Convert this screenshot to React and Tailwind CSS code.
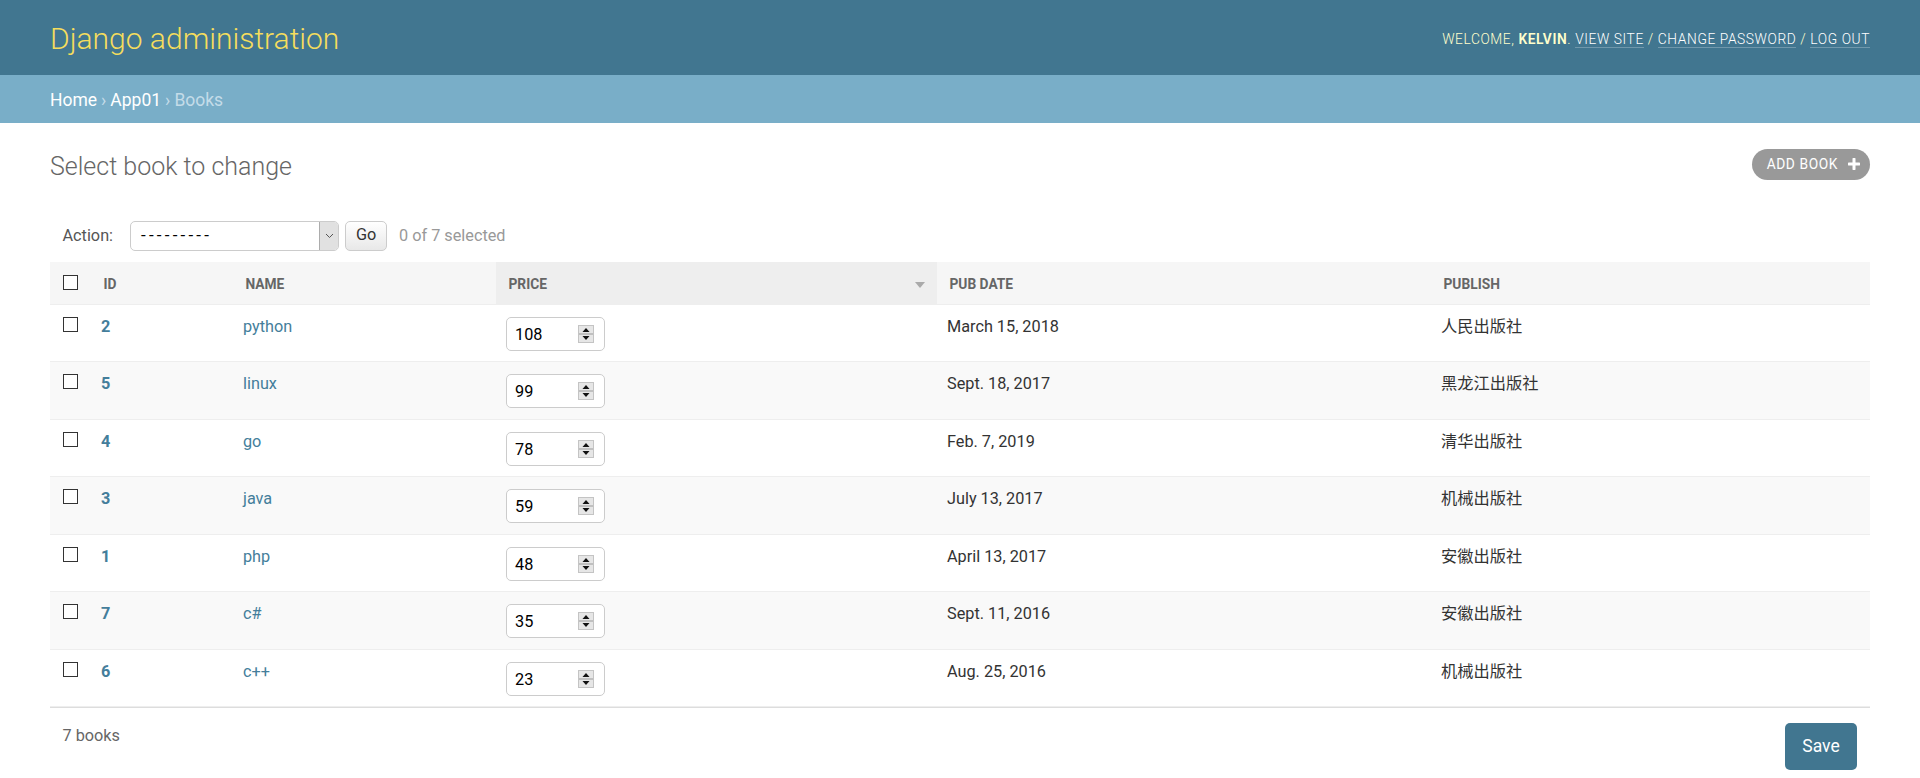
const books = [
  { id: 2, name: "python", price: 108, date: "March 15, 2018", publish: "人民出版社" },
  { id: 5, name: "linux", price: 99, date: "Sept. 18, 2017", publish: "黑龙江出版社" },
  { id: 4, name: "go", price: 78, date: "Feb. 7, 2019", publish: "清华出版社" },
  { id: 3, name: "java", price: 59, date: "July 13, 2017", publish: "机械出版社" },
  { id: 1, name: "php", price: 48, date: "April 13, 2017", publish: "安徽出版社" },
  { id: 7, name: "c#", price: 35, date: "Sept. 11, 2016", publish: "安徽出版社" },
  { id: 6, name: "c++", price: 23, date: "Aug. 25, 2016", publish: "机械出版社" },
];

function Checkbox() {
  return <span className="block w-[15px] h-[15px] border border-[#333] bg-white" />;
}

function Spinner() {
  return (
    <svg width="16" height="18" viewBox="0 0 16 18" className="shrink-0">
      <rect x="0.5" y="0.5" width="15" height="17" fill="#e6e6e6" stroke="#c4c4c4" />
      <line x1="1" y1="9" x2="15" y2="9" stroke="#9a9a9a" />
      <path d="M8 3 L11.5 7 L4.5 7 Z" fill="#111" />
      <path d="M8 15 L11.5 11 L4.5 11 Z" fill="#111" />
    </svg>
  );
}

function PriceInput({ value }) {
  return (
    <div className="mt-[2px] w-[99px] h-[34px] border border-[#ccc] rounded-[5px] bg-white flex items-center justify-between pl-[8px] pr-[10px]">
      <span className="text-[16.25px] text-black pt-[2px]">{value}</span>
      <Spinner />
    </div>
  );
}

function Header() {
  return (
    <div className="h-[75px] bg-[#417690] flex items-center justify-between px-[50px]">
      <h1 className="text-[30px] font-light text-[#f5dd5d] leading-none pt-[3px]">Django administration</h1>
      <div className="text-[13.75px] font-light tracking-[0.6px] uppercase text-[#ffc] pt-[4px]">
        Welcome, <strong className="font-semibold">kelvin</strong>.{" "}
        <a className="text-white border-b border-white/25">View site</a> /{" "}
        <a className="text-white border-b border-white/25">Change password</a> /{" "}
        <a className="text-white border-b border-white/25">Log out</a>
      </div>
    </div>
  );
}

function Breadcrumbs() {
  return (
    <div className="h-[48px] bg-[#79aec8] flex items-center px-[50px] pt-[2px] text-[17.5px] text-[#c4dce8]">
      <a className="text-white">Home</a>
      <span className="mx-[4px]">›</span>
      <a className="text-white">App01</a>
      <span className="mx-[4px]">›</span>
      <span>Books</span>
    </div>
  );
}

function ActionBar() {
  return (
    <div className="mt-[28px] h-[54px] flex items-center px-[12.5px] pt-[1px] text-[16.25px]">
      <label className="text-[#555] pt-[2px]">Action:</label>
      <div className="ml-[17px] w-[209px] h-[30px] border border-[#ccc] rounded-[5px] bg-white flex items-stretch overflow-hidden">
        <span className="flex-1 flex items-center pl-[10px] text-[17px] text-black tracking-[3.2px]">---------</span>
        <span className="w-[19px] bg-[#e1e1e1] border-l border-[#acacac] flex items-center justify-center">
          <svg width="9" height="6" viewBox="0 0 9 6">
            <path d="M1 1 L4.5 4.5 L8 1" fill="none" stroke="#555" strokeWidth="1" />
          </svg>
        </span>
      </div>
      <button className="ml-[6px] w-[42px] h-[30px] border border-[#ccc] rounded-[5px] bg-gradient-to-b from-white to-[#e8e8e8] text-[#333] text-[16.25px]">
        Go
      </button>
      <span className="ml-[12px] text-[#999] pt-[1px]">0 of 7 selected</span>
    </div>
  );
}

function BookTable() {
  return (
    <table className="w-full table-fixed border-collapse">
      <colgroup>
        <col className="w-[41px]" />
        <col className="w-[142px]" />
        <col className="w-[263px]" />
        <col className="w-[441px]" />
        <col className="w-[494px]" />
        <col />
      </colgroup>
      <thead>
        <tr className="h-[42px] bg-[#f6f6f6] text-[13.75px] font-bold uppercase text-[#666] text-left border-b border-[#eee]">
          <th className="pl-[13px] align-middle">
            <Checkbox />
          </th>
          <th className="pl-[12.5px] pt-[4px]">ID</th>
          <th className="pl-[12.5px] pt-[4px]">Name</th>
          <th className="pl-[12.5px] pt-[4px] bg-[#eee]">
            <div className="flex items-center justify-between pr-[12px]">
              <span>Price</span>
              <svg width="10" height="6" viewBox="0 0 10 6">
                <path d="M0 0 L10 0 L5 6 Z" fill="#aaa" />
              </svg>
            </div>
          </th>
          <th className="pl-[12.5px] pt-[4px]">Pub date</th>
          <th className="pl-[12.5px] pt-[4px]">Publish</th>
        </tr>
      </thead>
      <tbody className="text-[16.25px] leading-[20px] text-[#333]">
        {books.map((b, i) => (
          <tr key={b.id} className={`h-[57.5px] border-b border-[#eee] ${i % 2 === 1 ? "bg-[#f9f9f9]" : "bg-white"}`}>
            <td className="pl-[13px] pt-[12px] align-top">
              <Checkbox />
            </td>
            <td className="pl-[10px] pt-[12px] align-top font-bold text-[#447e9b]">{b.id}</td>
            <td className="pl-[10px] pt-[12px] align-top text-[#447e9b]">{b.name}</td>
            <td className="pl-[10px] pt-[10px] align-top">
              <PriceInput value={b.price} />
            </td>
            <td className="pl-[10px] pt-[12px] align-top">{b.date}</td>
            <td className="pl-[10px] pt-[12px] align-top">{b.publish}</td>
          </tr>
        ))}
      </tbody>
    </table>
  );
}

export default function App() {
  return (
    <div className="min-h-[778px] bg-white font-[Roboto,'Noto_Sans_CJK_SC',sans-serif] text-[#333]">
      <Header />
      <Breadcrumbs />
      <div className="px-[50px] pt-[25px]">
        <div className="h-[32px] flex items-center justify-between">
          <h1 className="text-[25px] font-light text-[#666] pt-[5px]">Select book to change</h1>
          <a className="h-[31px] rounded-full bg-[#999] text-white text-[13.75px] uppercase tracking-[0.6px] flex items-center pl-[15px] pr-[10px]">
            Add book
            <svg width="12" height="12" viewBox="0 0 12 12" className="ml-[10px]">
              <path d="M6 1 V11 M1 6 H11" stroke="white" strokeWidth="3" strokeLinecap="round" />
            </svg>
          </a>
        </div>
        <ActionBar />
        <BookTable />
        <div className="border-t border-[#ddd] flex items-start justify-between">
          <span className="pl-[12.5px] pt-[16px] text-[16.25px] text-[#666]">7 books</span>
          <button className="mt-[15px] mr-[13px] w-[72px] h-[47px] rounded-[5px] bg-[#417690] text-white text-[17.5px]">
            Save
          </button>
        </div>
      </div>
    </div>
  );
}
